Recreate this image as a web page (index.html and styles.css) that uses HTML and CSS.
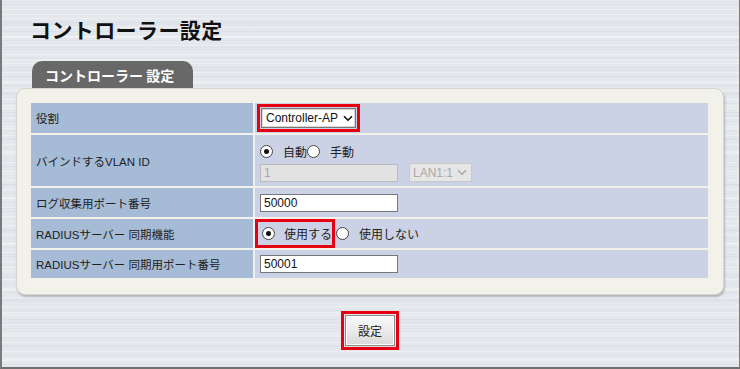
FILE: index.html
```html
<!DOCTYPE html>
<html lang="ja">
<head>
<meta charset="utf-8">
<title>コントローラー設定</title>
<link rel="stylesheet" href="styles.css">
</head>
<body>
<div class="page">
  <h1 class="title">コントローラー設定</h1>
  <div class="tab">コントローラー 設定</div>
  <div class="panel">
    <div class="grid">
      <div class="label r1">役割</div>
      <div class="value r1">
        <span class="hl hl-select">
          <span class="select"><span class="opt">Controller-AP</span>
            <svg class="chev" width="10" height="7" viewBox="0 0 10 7"><path d="M1 1.2 L5 5.2 L9 1.2" fill="none" stroke="#111" stroke-width="1.6"/></svg>
          </span>
        </span>
      </div>

      <div class="label r2">バインドするVLAN ID</div>
      <div class="value r2 stack">
        <div class="radios">
          <span class="radio on"></span><span class="rtext">自動</span>
          <span class="radio"></span><span class="rtext">手動</span>
        </div>
        <div class="line">
          <span class="input disabled">1</span>
          <span class="select small disabled"><span class="opt">LAN1:1</span>
            <svg class="chev" width="10" height="7" viewBox="0 0 10 7"><path d="M1 1.2 L5 5.2 L9 1.2" fill="none" stroke="#aaa" stroke-width="1.6"/></svg>
          </span>
        </div>
      </div>

      <div class="label r3">ログ収集用ポート番号</div>
      <div class="value r3"><span class="input">50000</span></div>

      <div class="label r4">RADIUSサーバー 同期機能</div>
      <div class="value r4 tight">
        <span class="hl hl-radio"><span class="radio on"></span><span class="rtext">使用する</span></span><span class="radio"></span><span class="rtext">使用しない</span>
      </div>

      <div class="label r5">RADIUSサーバー 同期用ポート番号</div>
      <div class="value r5"><span class="input">50001</span></div>
    </div>
  </div>
  <div class="actions">
    <span class="hl hl-btn"><span class="button">設定</span></span>
  </div>
</div>
</body>
</html>
```

FILE: styles.css
```css
* { box-sizing: border-box; }
html, body { margin: 0; padding: 0; }
body {
  font-family: "Liberation Sans", "Noto Sans CJK JP", sans-serif;
  color: #222;
}
.page {
  width: 740px;
  height: 369px;
  border-left: 2px solid #7a7a7a;
  border-right: 1px solid #7a7a7a;
  border-bottom: 2px solid #6f6f6f;
  background-color: #e4e7ec;
  background-image:
    repeating-linear-gradient(180deg, rgba(255,255,255,0.35) 0 1px, rgba(255,255,255,0) 1px 4px, rgba(205,210,218,0.28) 4px 5px, rgba(255,255,255,0) 5px 9px),
    repeating-linear-gradient(180deg, rgba(214,218,225,0.3) 0 2px, rgba(255,255,255,0) 2px 13px, rgba(246,247,249,0.4) 13px 15px, rgba(255,255,255,0) 15px 23px);
  padding-top: 15px;
}
.title {
  margin: 0 0 0 28px;
  font-family: "Noto Sans CJK JP", sans-serif;
  font-weight: 700;
  font-size: 21px;
  line-height: 28px;
  color: #111;
  letter-spacing: 0.4px;
}
.tab {
  margin: 18px 0 0 30px;
  width: 161px;
  height: 27px;
  background: #686868;
  border-radius: 10px 10px 0 0;
  color: #fff;
  font-family: "Noto Sans CJK JP", sans-serif;
  font-weight: 700;
  font-size: 14px;
  line-height: 28px;
  padding-left: 13px;
}
.panel {
  margin: 0 15px 0 14px;
  background: #f3f2ea;
  border-radius: 9px;
  border: 1px solid #d6d6d0;
  box-shadow: 1px 2px 2px rgba(120,120,120,0.45);
  padding: 14px 15px 16px 14px;
}
.grid {
  display: grid;
  grid-template-columns: 222px 1fr;
  grid-template-rows: 30px 51px 29px 29px 28px;
  gap: 2px;
}
.label {
  background: #a6bbd6;
  font-size: 11.5px;
  display: flex;
  align-items: center;
  padding-left: 5px;
  color: #222;
  font-family: "Noto Sans CJK JP", sans-serif;
}
.label.r2, .label.r5, .label.r4 { font-family: "Liberation Sans", "Noto Sans CJK JP", sans-serif; }
.value {
  background: #ccd2e6;
  display: flex;
  align-items: center;
  padding-left: 5px;
  font-size: 12px;
}
.value.stack {
  flex-direction: column;
  align-items: flex-start;
  justify-content: flex-start;
  padding-top: 9px;
}
.value.tight { padding-left: 0; }
.radios { display: flex; align-items: center; height: 15px; }
.radio {
  display: inline-block;
  width: 13px;
  height: 13px;
  border-radius: 50%;
  background: #fff;
  border: 1px solid #444;
  position: relative;
  flex: none;
}
.radio.on::after {
  content: "";
  position: absolute;
  left: 3px; top: 3px;
  width: 5px; height: 5px;
  border-radius: 50%;
  background: #111;
}
.rtext {
  font-family: "Noto Sans CJK JP", sans-serif;
  font-size: 12px;
  margin-left: 10px;
  margin-right: 0;
  line-height: 15px;
  color: #222;
}
.line { display: flex; align-items: center; margin-top: 4px; gap: 11px; }
.input {
  display: inline-block;
  width: 138px;
  height: 18px;
  background: #fff;
  border: 1px solid #777;
  font-size: 12px;
  line-height: 16px;
  padding-left: 3px;
  color: #111;
}
.input.disabled {
  background: #e2e2e2;
  border-color: #bcbcbc;
  color: #a8a8a8;
}
.hl {
  display: inline-flex;
  align-items: center;
  border: 3px solid #e60012;
}
.hl-select { margin-left: -3px; padding: 1px; }
.select {
  display: inline-flex;
  align-items: center;
  width: 95px;
  height: 20px;
  background: #fff;
  border: 1px solid #777;
  box-shadow: inset 0 0 0 1px #d8d8d8;
  font-size: 12px;
  padding-left: 4px;
  color: #111;
  gap: 5px;
  white-space: nowrap;
}
.opt { white-space: nowrap; flex: none; }
.chev { flex: none; }
.select.small {
  width: 63px;
  height: 19px;
  background: #e6e6e6;
  border-color: #c8c8c8;
  box-shadow: none;
  color: #a9a9a9;
  font-size: 12px;
  padding-left: 3px;
  gap: 4px;
}
.hl-radio {
  height: 29px;
  padding-left: 4px;
  padding-right: 0;
  margin-left: 0;
}
.hl-radio .rtext { margin-right: 0; margin-left: 9px; }
.hl-radio + .radio { margin-left: 1px; }
.actions {
  display: flex;
  justify-content: center;
  margin-top: 16px;
  padding-right: 1px;
}
.hl-btn { padding: 1px; }
.button {
  display: inline-flex;
  align-items: center;
  justify-content: center;
  width: 50px;
  height: 31px;
  border: 1px solid #8a8a8a;
  box-shadow: inset 0 0 0 1px #fff;
  background: linear-gradient(180deg, #fbfbfb 0%, #e9e9e9 55%, #d9d9d9 100%);
  font-family: "Noto Sans CJK JP", sans-serif;
  font-size: 12px;
  color: #222;
}
```
